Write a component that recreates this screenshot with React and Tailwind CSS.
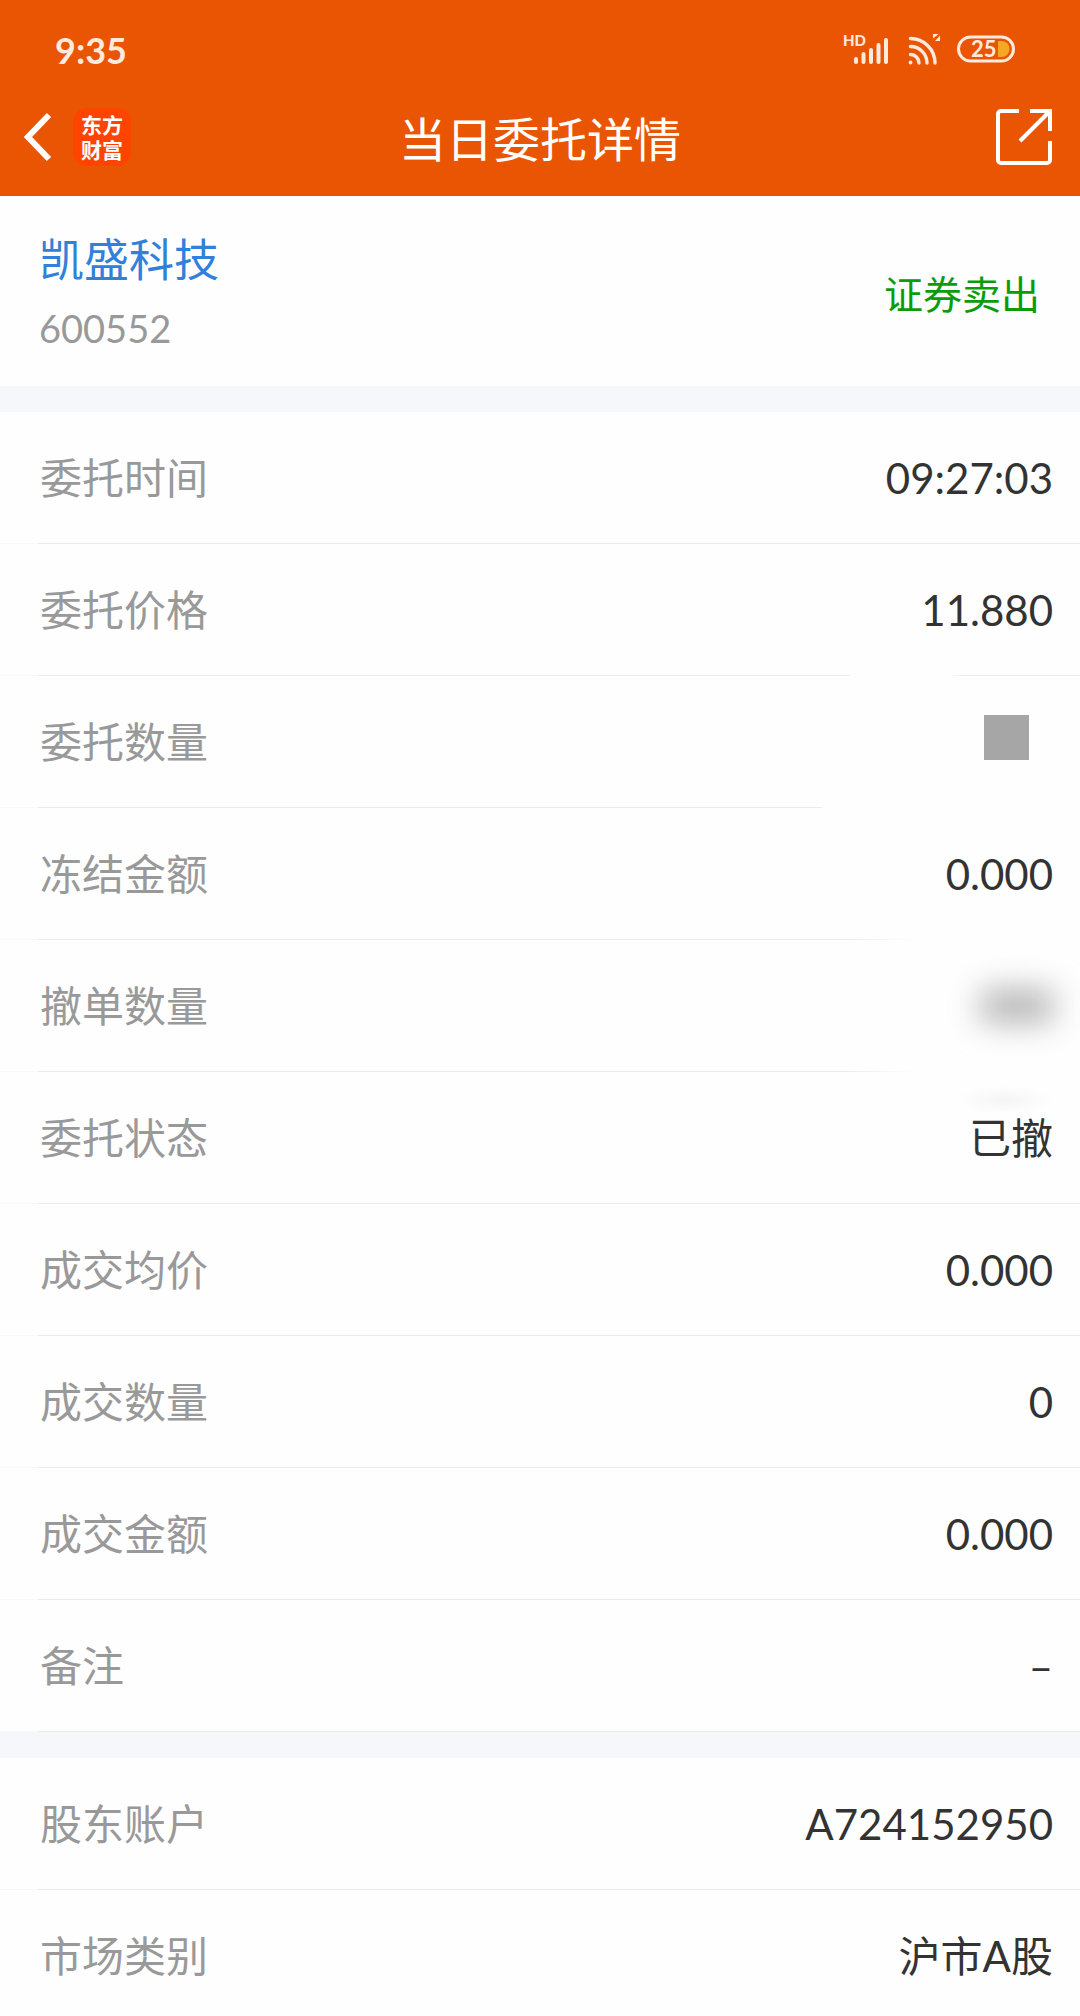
import React from 'react';

const orderRows = [
  { label: '委托时间', value: '09:27:03' },
  { label: '委托价格', value: '11.880', line: 'gap' },
  { label: '委托数量', mask: 'square', line: 'short' },
  { label: '冻结金额', value: '0.000', line: 'fade' },
  { label: '撤单数量', mask: 'blur', line: 'fade' },
  { label: '委托状态', value: '已撤' },
  { label: '成交均价', value: '0.000' },
  { label: '成交数量', value: '0' },
  { label: '成交金额', value: '0.000' },
  { label: '备注', value: '–' },
];

const accountRows = [
  { label: '股东账户', value: 'A724152950' },
  { label: '市场类别', value: '沪市A股', last: true },
];

const SignalIcon = () => (
  <svg width="48" height="44" viewBox="0 -6 48 44" fill="none" aria-label="HD signal">
    <text x="0" y="12" fill="#ffeadd" fontSize="15" fontWeight="900" fontFamily="Lato, sans-serif">HD</text>
    <g stroke="#ffeadd" strokeWidth="4" strokeLinecap="round">
      <path d="M13 25v3" />
      <path d="M20.500 20v8" />
      <path d="M28 16v12" />
      <path d="M35.500 11v17" />
      <path d="M43 6v22" />
    </g>
  </svg>
);

const WifiIcon = () => (
  <svg width="34" height="32" viewBox="0 0 34 32" fill="none" aria-label="Wi-Fi">
    <circle cx="3.500" cy="28.500" r="1.900" fill="#ffeadd" />
    <g stroke="#ffeadd" strokeWidth="3.400" strokeLinecap="round">
      <path d="M3.500 20.500a8.500 8.500 0 0 1 8.500 8.500" />
      <path d="M3.500 12.500a16.500 16.500 0 0 1 16.500 16.500" />
      <path d="M3.500 4.500a24.500 24.500 0 0 1 24.500 24.500" />
    </g>
    <path d="M26 0h5.500L26 4.500z" fill="#ffeadd" />
    <path d="M33 1.500V7h-5z" fill="#ffeadd" />
  </svg>
);

const Battery = () => (
  <svg width="58" height="44" viewBox="0 -8 58 44" fill="none" aria-label="Battery 25%">
    <rect x="1.500" y="1" width="55" height="24" rx="12" stroke="#ffeadd" strokeWidth="3" />
    <path d="M41 5h3.500a8 8 0 0 1 0 16H41z" fill="#f7a823" />
    <text x="14" y="21" fill="#ffeadd" fontSize="22" fontWeight="700" fontFamily="Lato, sans-serif">25</text>
  </svg>
);

const BackIcon = () => (
  <svg width="30" height="50" viewBox="0 0 30 50" fill="none">
    <path d="M25 3 4 25l21 22" stroke="#fff" strokeWidth="6" />
  </svg>
);

const ShareIcon = () => (
  <svg width="60" height="56" viewBox="0 0 60 56" fill="none" stroke="#fff" strokeWidth="4">
    <path d="M23 2H5a3 3 0 0 0-3 3v46a3 3 0 0 0 3 3h46a3 3 0 0 0 3-3V32" />
    <path d="M34 2h20v20" />
    <path d="M53 3 24 32" />
  </svg>
);

const Divider = ({ line }) => (
  <div className="flex h-px">
    <div className="w-[38px] bg-[#f8f8f8]" />
    <div className="flex-1 bg-[#ebebeb]" />
    {line === 'gap' && (
      <>
        <div className="w-[100px]" />
        <div className="w-[130px] bg-linear-to-r from-transparent to-[#ebebeb] to-10%" />
      </>
    )}
    {line === 'short' && <div className="w-[258px]" />}
    {line === 'fade' && <div className="w-[236px] bg-linear-to-r from-[#ebebeb] to-transparent to-30%" />}
  </div>
);

const Value = ({ value, mask }) => {
  if (mask === 'square') {
    return <span className="mr-6 mb-2.5 block size-[45px] bg-[#a6a6a6]" />;
  }
  if (mask === 'blur') {
    return (
      <span className="relative block">
        <span className="block h-8 w-[72px] bg-[#b0b0b0] blur-[16px]" />
        <span className="absolute top-24 right-0 h-7 w-24 bg-[radial-gradient(closest-side,#f5f5f5,transparent)]" />
      </span>
    );
  }
  return value;
};

const Row = ({ label, value, mask, line, last }) => (
  <div>
    <div className={`flex justify-between pl-10 pr-[27px] pt-9 text-[42px] leading-[60px] ${last ? 'pb-[30px]' : 'pb-[35px]'}`}>
      <dt className="text-[#999]">{label}</dt>
      <dd className="flex items-center text-[#333]">
        <Value value={value} mask={mask} />
      </dd>
    </div>
    {!last && <Divider line={line} />}
  </div>
);

const Header = () => (
  <header className="bg-[#ea5504] text-white">
    <div className="flex h-[82px] items-center justify-between pl-[55px] pr-[65px] pt-[18px]">
      <span className="text-4xl font-bold text-[#ffeadd]">9:35</span>
      <div className="flex items-center gap-4">
        <SignalIcon />
        <WifiIcon />
        <Battery />
      </div>
    </div>
    <div className="grid h-[114px] grid-cols-[1fr_auto_1fr] items-center px-6 pb-1">
      <div className="flex items-center gap-[19px]">
        <button type="button" aria-label="返回">
          <BackIcon />
        </button>
        <span className="flex size-[58px] flex-col items-center justify-center rounded-[14px] bg-[#ff4400] text-[21px] font-bold leading-[25px]">
          <span>东方</span>
          <span>财富</span>
        </span>
      </div>
      <h1 className="pt-1 text-[47px] leading-[60px]">当日委托详情</h1>
      <button type="button" aria-label="分享" className="justify-self-end">
        <ShareIcon />
      </button>
    </div>
  </header>
);

export default function App() {
  return (
    <div className="min-h-screen bg-[#fefefe] font-[Lato,'Noto_Sans_CJK_SC',sans-serif]" lang="zh-CN">
      <Header />
      <main>
        <section className="flex items-center justify-between pb-6 pl-[39px] pr-10 pt-[30px]">
          <div>
            <h2 className="text-[45px] leading-[68px] text-[#3180d9]">凯盛科技</h2>
            <p className="text-[38px] leading-[68px] text-[#999]">600552</p>
          </div>
          <span className="text-[39px] leading-[60px] text-[#0a9c0a]">证券卖出</span>
        </section>
        <div className="h-[26px] bg-[#f6f7fa]" />
        <dl>
          {orderRows.map((row) => (
            <Row key={row.label} {...row} />
          ))}
        </dl>
        <div className="h-[26px] bg-[#f6f7fa]" />
        <dl>
          {accountRows.map((row) => (
            <Row key={row.label} {...row} />
          ))}
        </dl>
      </main>
    </div>
  );
}
